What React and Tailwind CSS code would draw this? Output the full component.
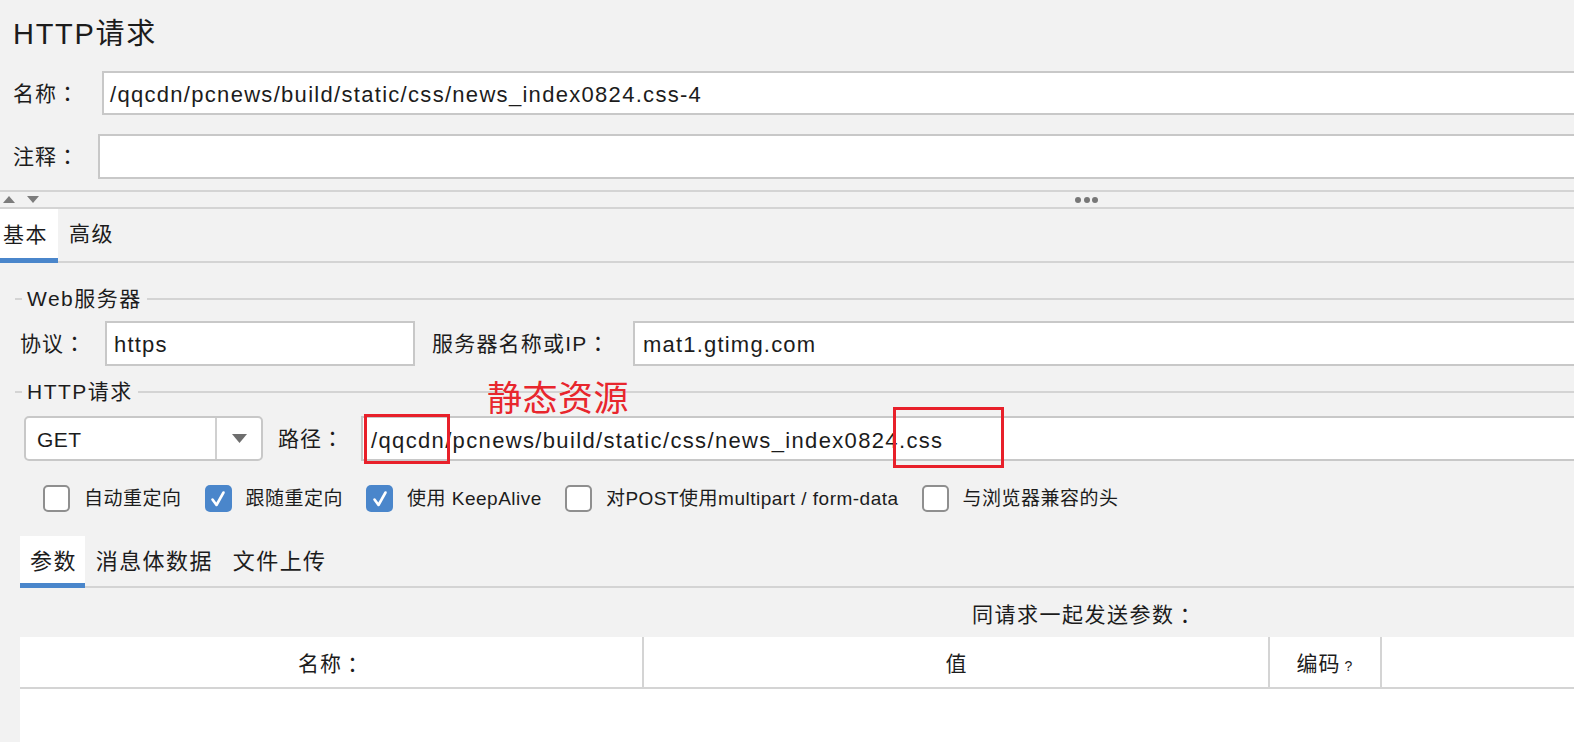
import React from "react";

const FONT = "[font-family:'Liberation_Sans','Noto_Sans_CJK_SC',sans-serif]";

function Colon() {
  return <span className="[font-family:'Noto_Sans_CJK_TC',sans-serif]">：</span>;
}

function Legend({ children }) {
  return (
    <div className="flex items-center h-[24px] pl-[15px]">
      <div className="w-[7px] h-[2px] bg-[#d4d4d4]" />
      <span className="px-[5px] text-[21px] leading-[24px] tracking-[1.5px]">{children}</span>
      <div className="flex-1 h-[2px] bg-[#d4d4d4]" />
    </div>
  );
}

function Checkbox({ checked }) {
  if (checked) {
    return (
      <div className="w-[27px] h-[27px] rounded-[5px] bg-[#4a86cb] flex items-center justify-center shrink-0">
        <svg width="16" height="18" viewBox="0 0 16 18">
          <path d="M2.5 9.5 L6.5 15 L13.5 2.5" fill="none" stroke="white" strokeWidth="2.6" strokeLinecap="round" strokeLinejoin="round" />
        </svg>
      </div>
    );
  }
  return <div className="w-[27px] h-[27px] rounded-[5px] bg-white border-2 border-[#8f8f8f] shrink-0" />;
}

function CheckItem({ checked, label, gap }) {
  return (
    <div className={`flex items-center ${gap}`}>
      <Checkbox checked={checked} />
      <span className="ml-[14px] text-[19px] leading-[26px] tracking-[0.5px] whitespace-nowrap">{label}</span>
    </div>
  );
}

export default function App() {
  return (
    <div className={`relative w-[1574px] h-[742px] overflow-hidden bg-[#f2f2f2] text-[#1c1c1c] flex flex-col ${FONT}`}>
      {/* Title */}
      <div className="h-[71px] pl-[13px] pt-[16px] text-[29px] leading-[36px] tracking-[1.7px] shrink-0">HTTP请求</div>

      {/* 名称 */}
      <div className="flex items-center h-[44px] shrink-0">
        <span className="w-[102px] pl-[13px] text-[21px] tracking-[1px]">名称<Colon /></span>
        <div className="flex-1 h-full bg-white border-2 border-r-0 border-[#c8c8c8] flex items-center pl-[6px] pt-[2px] text-[22px] tracking-[1.3px] whitespace-nowrap">
          /qqcdn/pcnews/build/static/css/news_index0824.css-4
        </div>
      </div>

      {/* 注释 */}
      <div className="flex items-center h-[45px] mt-[19px] shrink-0">
        <span className="w-[98px] pl-[13px] text-[21px] tracking-[1px]">注释<Colon /></span>
        <div className="flex-1 h-full bg-white border-2 border-r-0 border-[#c8c8c8]" />
      </div>

      {/* Splitter */}
      <div className="mt-[11px] h-[19px] border-y-2 border-[#d4d4d4] flex items-center shrink-0">
        <div className="flex items-center gap-[12px] pl-[3px]">
          <svg width="12" height="7" viewBox="0 0 12 7"><path d="M0 7 L6 0 L12 7 Z" fill="#7c7c7c" /></svg>
          <svg width="12" height="7" viewBox="0 0 12 7"><path d="M0 0 L6 7 L12 0 Z" fill="#7c7c7c" /></svg>
        </div>
        <div className="ml-[1036px] flex items-center gap-[2.5px]">
          <div className="w-[6px] h-[6px] rounded-full bg-[#777777]" />
          <div className="w-[6px] h-[6px] rounded-full bg-[#777777]" />
          <div className="w-[6px] h-[6px] rounded-full bg-[#777777]" />
        </div>
      </div>

      {/* Tabs 基本 / 高级 */}
      <div className="flex h-[54px] border-b-2 border-[#d4d4d4] shrink-0">
        <div className="-mb-[2px] bg-white border-b-[5px] border-[#4a86cb] pl-[3px] pr-[10px] pt-[2px] flex items-center text-[21px] tracking-[1.5px]">基本</div>
        <div className="pl-[11px] flex items-center pb-[3px] text-[21px] tracking-[1.5px]">高级</div>
      </div>

      {/* Web服务器 */}
      <div className="mt-[24px] shrink-0">
        <Legend>Web服务器</Legend>
      </div>
      <div className="flex items-center h-[45px] mt-[10px] pl-[20px] shrink-0">
        <span className="w-[85px] text-[21px] tracking-[1px]">协议<Colon /></span>
        <div className="w-[310px] h-full bg-white border-2 border-[#c8c8c8] flex items-center pl-[7px] pt-[2px] text-[22px] tracking-[1.2px]">https</div>
        <span className="ml-[17px] w-[201px] text-[21px] tracking-[1.2px] whitespace-nowrap">服务器名称或IP<Colon /></span>
        <div className="flex-1 h-full bg-white border-2 border-r-0 border-[#c8c8c8] flex items-center pl-[8px] pt-[2px] text-[22px] tracking-[1.2px]">mat1.gtimg.com</div>
      </div>

      {/* HTTP请求 */}
      <div className="mt-[14px] shrink-0">
        <Legend>HTTP请求</Legend>
      </div>
      <div className="flex items-center h-[45px] mt-[12px] pl-[24px] shrink-0">
        <div className="w-[239px] h-full rounded-[5px] border-2 border-[#c8c8c8] bg-white flex">
          <div className="flex-1 flex items-center pl-[11px] pt-[2px] text-[21px] tracking-[0.5px]">GET</div>
          <div className="w-[46px] border-l-2 border-[#d0d0d0] flex items-center justify-center">
            <svg width="15" height="9" viewBox="0 0 15 9"><path d="M0 0 L15 0 L7.5 9 Z" fill="#6e6e6e" /></svg>
          </div>
        </div>
        <span className="ml-[15px] w-[83px] text-[21px] tracking-[1px]">路径<Colon /></span>
        <div className="flex-1 h-full bg-white border-2 border-r-0 border-[#c8c8c8] flex items-center pl-[8px] pt-[3px] text-[22px] tracking-[1.35px] whitespace-nowrap">
          /qqcdn/pcnews/build/static/css/news_index0824.css
        </div>
      </div>

      {/* Checkboxes */}
      <div className="flex items-center h-[27px] mt-[24px] pl-[43px] shrink-0">
        <CheckItem checked={false} label="自动重定向" gap="mr-[23px]" />
        <CheckItem checked={true} label="跟随重定向" gap="mr-[23px]" />
        <CheckItem checked={true} label="使用 KeepAlive" gap="mr-[23px]" />
        <CheckItem checked={false} label="对POST使用multipart / form-data" gap="mr-[23px]" />
        <CheckItem checked={false} label="与浏览器兼容的头" gap="" />
      </div>

      {/* Sub tabs */}
      <div className="flex h-[52px] mt-[24px] ml-[20px] border-b-2 border-[#d4d4d4] shrink-0">
        <div className="-mb-[2px] bg-white border-b-[5px] border-[#4a86cb] pl-[10px] pr-[8px] pt-[4px] flex items-center text-[22px] tracking-[1.4px]">参数</div>
        <div className="pl-[11px] pr-[9px] flex items-center pt-[1px] text-[22px] tracking-[1.4px]">消息体数据</div>
        <div className="pl-[11px] flex items-center pt-[1px] text-[22px] tracking-[1.4px]">文件上传</div>
      </div>

      <div className="h-[49px] flex items-center pl-[972px] pt-[5px] text-[21px] tracking-[1.5px] whitespace-nowrap shrink-0">同请求一起发送参数<Colon /></div>

      {/* Table */}
      <div className="flex-1 ml-[20px] bg-white">
        <div className="flex h-[52px] border-b-2 border-[#d4d4d4]">
          <div className="w-[622px] flex items-center justify-center pt-[4px] text-[21px] tracking-[1px]">名称<Colon /></div>
          <div className="w-[626px] border-l-2 border-[#d4d4d4] flex items-center justify-center pt-[4px] text-[21px]">值</div>
          <div className="w-[112px] border-l-2 border-[#d4d4d4] flex items-center justify-center pt-[4px] text-[21px] tracking-[1px]">
            编码<span className="ml-[4px] text-[14px] mt-[4px]">?</span>
          </div>
          <div className="flex-1 border-l-2 border-[#d4d4d4]" />
        </div>
      </div>

      {/* Red annotations (overlay) */}
      <div className="absolute left-[487px] top-[378px] text-[35px] leading-[42px] text-[#e8262d] tracking-[0.5px]">静态资源</div>
      <div className="absolute left-[364px] top-[414px] w-[86px] h-[50px] border-[3px] border-[#e8202a]" />
      <div className="absolute left-[893px] top-[407px] w-[111px] h-[61px] border-[3px] border-[#e8202a]" />
    </div>
  );
}
